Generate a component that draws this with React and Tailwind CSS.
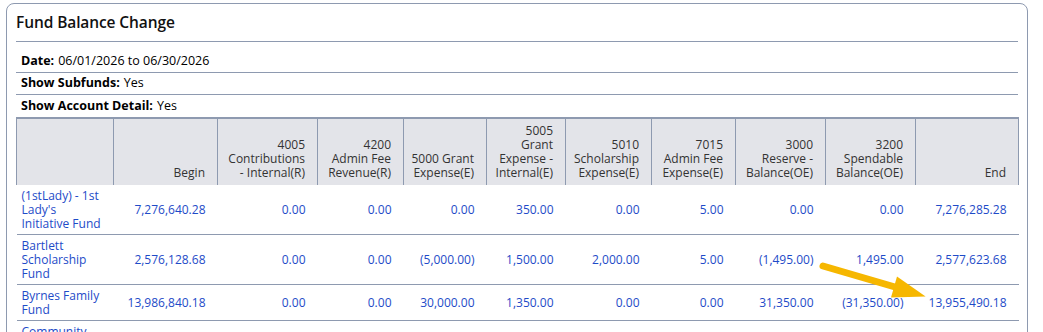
import React from 'react';

const cols = [97, 104, 100, 86, 83, 79, 86, 84, 90, 90, 103];

const headers = [
  [''],
  ['Begin'],
  ['4005', 'Contributions', '- Internal(R)'],
  ['4200', 'Admin Fee', 'Revenue(R)'],
  ['5000 Grant', 'Expense(E)'],
  ['5005', 'Grant', 'Expense -', 'Internal(E)'],
  ['5010', 'Scholarship', 'Expense(E)'],
  ['7015', 'Admin Fee', 'Expense(E)'],
  ['3000', 'Reserve -', 'Balance(OE)'],
  ['3200', 'Spendable', 'Balance(OE)'],
  ['End'],
];

const rows = [
  {
    name: ["(1stLady) - 1st", "Lady's", 'Initiative Fund'],
    values: ['7,276,640.28', '0.00', '0.00', '0.00', '350.00', '0.00', '5.00', '0.00', '0.00', '7,276,285.28'],
  },
  {
    name: ['Bartlett', 'Scholarship', 'Fund'],
    values: ['2,576,128.68', '0.00', '0.00', '(5,000.00)', '1,500.00', '2,000.00', '5.00', '(1,495.00)', '1,495.00', '2,577,623.68'],
  },
  {
    name: ['Byrnes Family', 'Fund'],
    values: ['13,986,840.18', '0.00', '0.00', '30,000.00', '1,350.00', '0.00', '0.00', '31,350.00', '(31,350.00)', '13,955,490.18'],
  },
  {
    name: ['Community', 'Foundation', 'Fund'],
    values: ['1,204,310.55', '0.00', '0.00', '0.00', '0.00', '0.00', '0.00', '0.00', '0.00', '1,204,310.55'],
  },
];

const lines = (arr) =>
  arr.map((t, i) => (
    <React.Fragment key={i}>
      {i > 0 && <br />}
      {t}
    </React.Fragment>
  ));

const InfoRow = ({ label, value, last }) => (
  <div
    className={
      last
        ? 'h-[22px] flex items-center pl-[5px] text-[12.5px] text-black'
        : 'h-[22px] flex items-center pl-[5px] border-b border-[#8e9ab0] text-[12.5px] text-black'
    }
  >
    <span className='font-bold'>{label}</span>
    <span className='ml-1'>{value}</span>
  </div>
);

export default function App() {
  return (
    <div className="relative w-[1043px] h-[332px] overflow-hidden bg-white font-['Open_Sans',sans-serif]">
      <div className='mt-[3px] ml-[6px] w-[1022px] h-[400px] border border-[#8e9ab0] rounded-[8px] px-[9px]'>
        {/* Title */}
        <div className='h-[38px] flex items-center border-b border-[#8e9ab0]'>
          <h1 className='text-[15.5px] font-semibold text-[#111] tracking-[-0.1px]'>Fund Balance Change</h1>
        </div>

        {/* Report parameters */}
        <div className='mt-[9px]'>
          <InfoRow label='Date:' value='06/01/2026 to 06/30/2026' />
          <InfoRow label='Show Subfunds:' value='Yes' />
          <InfoRow label='Show Account Detail:' value='Yes' last />
        </div>

        {/* Balance table */}
        <table className='table-fixed border-collapse text-[12px] leading-[14px] w-[1002px]'>
          <colgroup>
            {cols.map((w, i) => (
              <col key={i} style={{ width: w }} />
            ))}
          </colgroup>
          <thead>
            <tr className='bg-[#e3e4e9] border-t-2 border-[#8e9ab0]'>
              {headers.map((h, i) => (
                <th
                  key={i}
                  className='align-bottom text-right font-normal text-[#333] pt-[5px] pb-[5px] pl-[5px] pr-[12px] border-x border-[#8e9ab0]'
                >
                  {lines(h)}
                </th>
              ))}
            </tr>
          </thead>
          <tbody>
            {rows.map((r, i) => (
              <tr key={i} className='border-b border-[#8e9ab0]'>
                <td className='text-left align-middle text-[#1e4bc8] pt-[4px] pb-[3px] pl-[5px] pr-[4px]'>{lines(r.name)}</td>
                {r.values.map((v, j) => (
                  <td key={j} className='text-right align-middle text-[#1e4bc8] pt-[4px] pb-[3px] pl-[4px] pr-[12px] whitespace-nowrap'>
                    {v}
                  </td>
                ))}
              </tr>
            ))}
          </tbody>
        </table>
      </div>

      {/* Annotation arrow */}
      <svg className='absolute left-0 top-0 pointer-events-none' width='1043' height='332'>
        <line x1='823' y1='266' x2='895' y2='287' stroke='#f6b700' strokeWidth='7' strokeLinecap='round' />
        <polygon points='897,276.5 891,297.5 925.6,296.4' fill='#f6b700' />
      </svg>
    </div>
  );
}
